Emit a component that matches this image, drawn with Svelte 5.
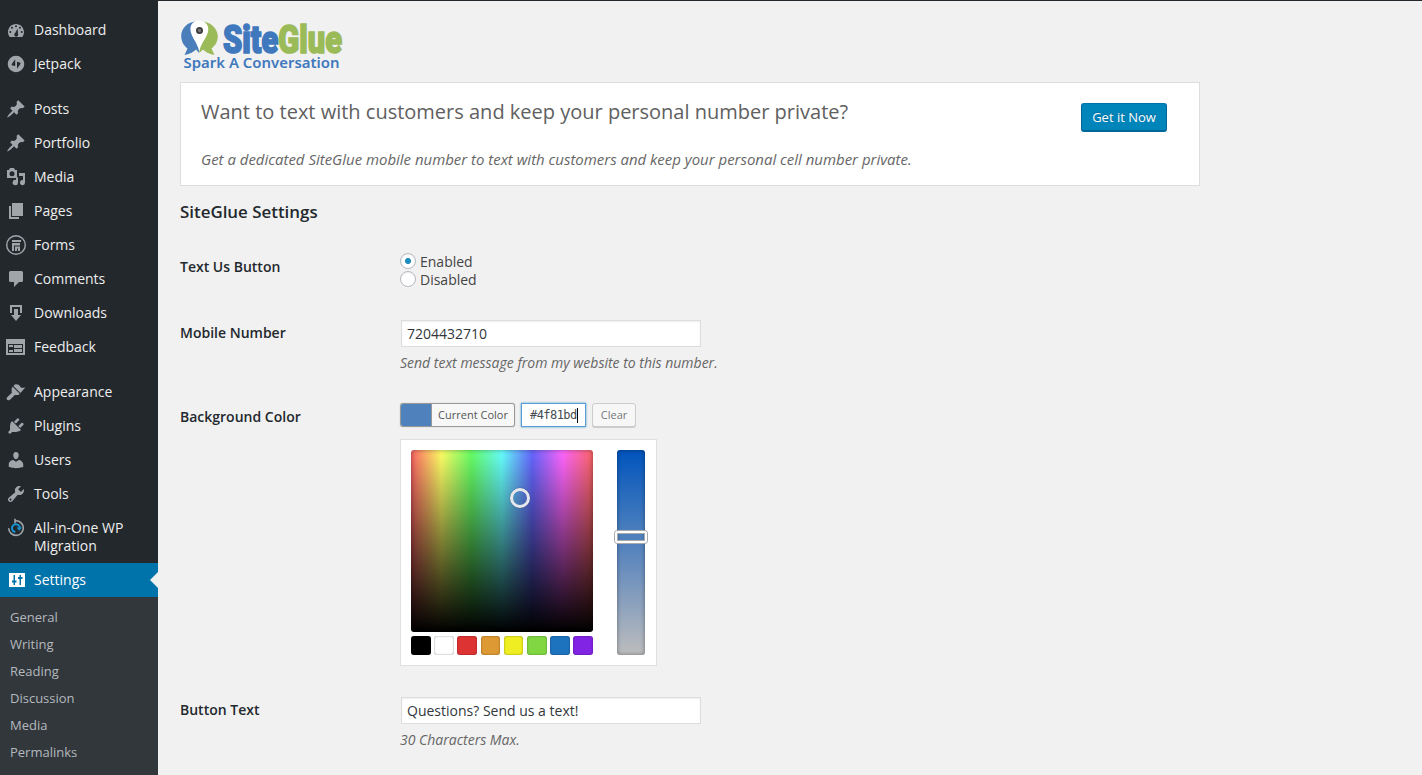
<script>
  const gauge = 'M3.800 17h12.400c1.100-1.400 1.800-3.100 1.800-5 0-4.400-3.600-8-8-8s-8 3.600-8 8c0 1.900.7 3.600 1.800 5zM10 5.300a1 1 0 1 1 0 2 1 1 0 1 1 0-2zM6 6.800a1 1 0 1 1 0 2 1 1 0 1 1 0-2zM14 6.800a1 1 0 1 1 0 2 1 1 0 1 1 0-2zM4.300 11a1 1 0 1 1 0 2 1 1 0 1 1 0-2zM15.700 11a1 1 0 1 1 0 2 1 1 0 1 1 0-2zM11.600 8.500L12 13.800a2 2 0 1 1-2.800-.9z';
  const pin = 'M10.440 3.020l1.820-1.820 6.360 6.350-1.830 1.820c-1.050-.68-2.480-.57-3.410.36l-.75.75c-.92.930-1.040 2.350-.35 3.410l-1.830 1.820-2.410-2.410-2.800 2.790c-.42.42-3.380 2.710-3.800 2.290s1.860-3.390 2.280-3.810l2.790-2.790L4.100 9.360l1.830-1.820c1.050.69 2.480.57 3.400-.36l.75-.75c.93-.92 1.050-2.350.36-3.410z';
  const groups = [
    [
      { label: 'Dashboard', d: gauge },
      { label: 'Jetpack', d: 'M10 1.700a8.300 8.300 0 1 1 0 16.600 8.300 8.300 0 1 1 0-16.600zM9.200 5.300L5.800 9.900c-.4.700.1 1.300.8 1.500L9.200 12zM11 7.800v6.900l3.400-4.600c.4-.7 0-1.300-.7-1.500z' }
    ],
    [
      { label: 'Posts', d: pin },
      { label: 'Portfolio', d: pin },
      { label: 'Media', d: 'M1 3h2l1-2h4l1 2h2v8H1zM6 4.300a2.500 2.500 0 1 0 0 5 2.500 2.500 0 1 0 0-5zM13 6h6v9.700a2.500 2.500 0 1 1-2-2.500V9h-4zM12 10v5.700a2.700 2.700 0 1 1-2-2.700v-1.500z' },
      { label: 'Pages', d: 'M6 15V2h11v13H6zm-1 1h8v2H3V5h2v11z' },
      { label: 'Forms', kind: 'forms' },
      { label: 'Comments', d: 'M4.500 2h11A1.500 1.500 0 0 1 17 3.500v8a1.500 1.500 0 0 1-1.500 1.500H13l-5 5v-5H4.500A1.500 1.500 0 0 1 3 11.500v-8A1.500 1.500 0 0 1 4.500 2z' },
      { label: 'Downloads', d: 'M14.010 4v6h2V2H4v8h2.010V4h8zm-2 2v6h3l-5 6-5-6h3V6h4z' },
      { label: 'Feedback', d: 'M0 2h19v16H0zM2 7v9h15V7zM3 8h4v2H3zM8 8h8v3H8zM3 13h4v2H3zM8 12h8v3H8z' }
    ],
    [
      { label: 'Appearance', d: 'M14.480 11.060L7.410 3.990l1.500-1.500c.5-.56 2.300-.47 3.510.32 1.210.8 1.430 1.280 2 2.090 1 1.200 2 1.100 5 .300zM6.700 4.700l7.070 7.070-1.060 1.060c-1.200.6-2.900 0-3.800.2-1 .3-4.100 4.900-6 5.200-1.800.2-2.900-1-2.100-2.400.9-1.600 4.700-4.300 5-5.400.1-.9-.6-2.500.1-4.700z' },
      { label: 'Plugins', d: 'M13.110 4.360L9.870 7.600 8 5.730l3.240-3.240c.35-.34 1.050-.2 1.560.32.520.51.660 1.210.31 1.550zm-8 1.770l.91-1.120 9.010 9.010-1.190.84c-.71.710-2.630 1.160-3.820 1.160H6.140L4.900 17.260c-.59.59-1.540.59-2.120 0a1.490 1.490 0 0 1 0-2.120l1.240-1.240v-3.880c0-1.130.4-3.190 1.090-3.890zm7.260 3.970l3.240-3.240c.34-.35 1.040-.21 1.550.31.520.51.660 1.210.31 1.550l-3.240 3.250z' },
      { label: 'Users', d: 'M10 9.250c-2.270 0-2.730-3.440-2.730-3.440C7 4.020 7.820 2 9.970 2c2.160 0 2.980 2.020 2.710 3.810 0 0-.41 3.440-2.680 3.440zm0 2.570L12.720 10c2.390 0 4.520 2.330 4.520 4.530v2.490s-3.650 1.130-7.240 1.130c-3.650 0-7.240-1.130-7.240-1.130v-2.490c0-2.250 1.940-4.480 4.470-4.480z' },
      { label: 'Tools', d: 'M16.680 9.770c-1.340 1.340-3.300 1.670-4.950.99l-5.410 6.520c-.99.99-2.590.99-3.580 0s-.99-2.590 0-3.570l6.520-5.420c-.68-1.650-.35-3.610.99-4.950 1.280-1.280 3.120-1.620 4.720-1.060l-2.890 2.890 2.820 2.820 2.860-2.870c.53 1.580.18 3.390-1.080 4.650zM3.810 16.210c.4.390 1.040.39 1.430 0 .4-.4.400-1.040 0-1.430-.39-.4-1.030-.4-1.430 0-.39.39-.39 1.030 0 1.430z' },
      { label: 'All-in-One WP Migration', kind: 'migrate' },
      { label: 'Settings', active: true, d: 'M3 3h16v14H3zM7.500 5v5.500H6v2h1.500V15H9v-2.500h1.500v-2H9V5zM13.500 5v2H12v2h1.500v6H15V9h1.500V7H15V5z' }
    ]
  ];
  const submenu = ['General', 'Writing', 'Reading', 'Discussion', 'Media', 'Permalinks'];
  const swatches = ['#000', '#fff', '#d33', '#d93', '#ee2', '#81d742', '#1e73be', '#8224e3'];
</script>

<div class="page">
  <nav class="sidebar">
    {#each groups as group}
      <ul class="group">
        {#each group as item}
          <li class="item" class:active={item.active}>
            <svg class="icon" viewBox="0 0 20 20">
              {#if item.kind === 'forms'}
                <circle cx="10" cy="10" r="9.300" fill="none" stroke="currentColor" stroke-width="1.400" />
                <path d="M6 5h9v2H6zM6 8h8v2.500H8V16H6zM9 11.500h5V16h-2v-2.500h-1V16H9z" />
              {:else if item.kind === 'migrate'}
                <path d="M9 2.800h1a7.300 7.300 0 1 1-7.300 7.500M9 5.300V.800" fill="none" stroke="currentColor" stroke-width="1.600" />
                <path d="M9.300 14a3.900 3.900 0 1 1 4.500-3.900" fill="none" stroke="#1595d3" stroke-width="2" />
                <path d="M10.500 9.500h5.500l-2.700 3.200z" fill="#1595d3" />
              {:else}
                <path fill-rule="evenodd" d={item.d} />
              {/if}
            </svg>
            <span>{item.label}</span>
          </li>
        {/each}
      </ul>
    {/each}
    <ul class="submenu">
      {#each submenu as entry}<li>{entry}</li>{/each}
    </ul>
  </nav>

  <main>
    <svg class="logo" width="166" height="58" viewBox="0 0 166 58">
      <path d="M18 2.500C8 2 1 9 1.200 17.500c.2 5.500 3 9.500 6.300 12L4.500 36c6-1 9.500-3.500 11.500-5.500l3 3.500z" fill="#4a7ebb" />
      <path d="M20 2.500c10-.5 17.800 6.500 17.800 15 0 5.500-3 9.500-6.300 12l3 6.500c-6-1-9.500-3.500-11.500-5.500L19.300 34z" fill="#9bbb59" />
      <path d="M19 1.500C13 1.500 10 6 10.500 11c.6 7 6 11 8.800 21C22 22 27.700 18 28.300 11c.4-5-3.300-9.500-9.300-9.500z" fill="#fff" />
      <circle cx="19.500" cy="11.500" r="2.600" fill="#777" stroke="#3d3d3d" stroke-width="1.800" />
      <text class="brand" x="43" y="33.500" textLength="119" lengthAdjust="spacingAndGlyphs"><tspan class="blue">Site</tspan><tspan class="green">Glue</tspan></text>
      <text class="slogan" x="3.500" y="49" textLength="156" lengthAdjust="spacingAndGlyphs">Spark A Conversation</text>
    </svg>

    <section class="promo">
      <div>
        <h2>Want to text with customers and keep your personal number private?</h2>
        <p>Get a dedicated SiteGlue mobile number to text with customers and keep your personal cell number private.</p>
      </div>
      <button class="primary">Get it Now</button>
    </section>

    <h3>SiteGlue Settings</h3>

    <div class="row toggle">
      <div class="label">Text Us Button</div>
      <div class="field">
        <div class="option"><i class="radio on"></i>Enabled</div>
        <div class="option"><i class="radio"></i>Disabled</div>
      </div>
    </div>
    <div class="row mobile">
      <div class="label">Mobile Number</div>
      <div class="field">
        <div class="input">7204432710</div>
        <p class="hint">Send text message from my website to this number.</p>
      </div>
    </div>
    <div class="row color">
      <div class="label">Background Color</div>
      <div class="field">
        <div class="controls">
          <div class="current"><i></i><span>Current Color</span></div>
          <div class="hex">#4f81bd<i class="caret"></i></div>
          <div class="clear">Clear</div>
        </div>
        <div class="picker">
          <div class="left">
            <div class="square"><i class="handle"></i></div>
            <div class="palette">
              {#each swatches as c}<i style:background={c}></i>{/each}
            </div>
          </div>
          <div class="strip"><i class="slider"></i></div>
        </div>
      </div>
    </div>
    <div class="row text">
      <div class="label">Button Text</div>
      <div class="field">
        <div class="input">Questions? Send us a text!</div>
        <p class="hint">30 Characters Max.</p>
      </div>
    </div>
  </main>
</div>

<style>
  :global(body) { margin: 0; overflow: hidden; }
  .page {
    display: flex; width: 1422px; height: 775px; overflow: hidden; box-sizing: border-box;
    border-top: 1px solid #23282d; background: #f1f1f1; color: #444;
    font: 14px/18px "Open Sans", sans-serif;
  }
  ul, p, h2, h3 { margin: 0; padding: 0; }
  li { list-style: none; }
  .sidebar { width: 158px; flex: none; height: 774px; padding-top: 12px; box-sizing: border-box; background: #23282d; overflow: hidden; }
  .group + .group { margin-top: 11px; }
  .item { position: relative; display: flex; gap: 8px; padding: 8px 20px 8px 6px; color: #eee; }
  .icon { width: 20px; height: 20px; margin: -1px 0; flex: none; color: #a0a5aa; fill: currentColor; overflow: visible; }
  .active { background: #0073aa; color: #fff; }
  .active .icon { color: #fff; }
  .active::after { content: ''; position: absolute; right: 0; top: 9px; border: 8px solid transparent; border-right-color: #f1f1f1; border-left: 0; }
  .submenu { height: 300px; padding: 7px 10px; background: #32373c; color: #b4b9be; font-size: 13px; }
  .submenu li { height: 27px; line-height: 27px; white-space: nowrap; }
  main { flex: 1; padding: 17px 0 0 22px; }
  .logo { display: block; margin-top: 1px; overflow: visible; }
  .brand { font: 900 39px Roboto, sans-serif; stroke-width: 1.7px; }
  .blue { fill: #4078bd; stroke: #4078bd; }
  .green { fill: #9bbb59; stroke: #9bbb59; }
  .slogan { font: 600 14px "Noto Sans", sans-serif; fill: #4078bd; }
  .promo { display: flex; justify-content: space-between; align-items: flex-start; box-sizing: border-box; width: 1020px; height: 104px; margin-top: 5px; padding: 15px 32px 0 20px; background: #fff; border: 1px solid #dedede; }
  h2 { color: #606060; font-size: 20px; line-height: 28px; font-weight: 400; white-space: nowrap; }
  .promo p { margin-top: 23px; font-size: 14.960px; font-style: italic; line-height: 20px; color: #666; white-space: nowrap; }
  .primary { margin-top: 5px; width: 86px; height: 29px; padding: 0; box-sizing: border-box; background: #0085ba; border: 1px solid #006799; border-top-color: #0073aa; border-bottom-width: 2px; border-radius: 3px; color: #fff; font: 13px "Open Sans", sans-serif; text-shadow: 0 -1px 1px #006799; }
  h3 { margin-top: 15px; color: #23282d; font-size: 16.900px; line-height: 22px; font-weight: 600; }
  .row { display: flex; }
  .label { width: 220px; flex: none; color: #23282d; font-weight: 600; }
  .toggle { padding-top: 30px; height: 36px; }
  .toggle .label { padding-top: 5px; }
  .option { display: flex; gap: 4px; height: 18px; }
  .radio { box-sizing: border-box; width: 16px; height: 16px; border: 1px solid #b4b9be; border-radius: 50%; background: #fff; box-shadow: inset 0 1px 2px #0001; }
  .on { background: radial-gradient(circle, #1e8cbe 0 2.700px, #fff 3.300px); }
  .mobile { margin-top: 31px; height: 53px; }
  .mobile .label, .text .label { padding-top: 4px; }
  .input { box-sizing: border-box; width: 300px; height: 27px; margin-left: 1px; padding: 4px 5px; background: #fff; border: 1px solid #ddd; box-shadow: inset 0 1px 2px #00000012; color: #32373c; line-height: 18px; }
  .hint { margin-top: 7px; color: #666; font-style: italic; }
  .color { margin-top: 30px; height: 263px; }
  .color .label { padding-top: 5px; }
  .controls { display: flex; height: 24px; font-size: 11px; }
  .current, .clear { box-sizing: border-box; display: flex; height: 24px; background: #f7f7f7; border: 1px solid #999; border-radius: 3px; line-height: 22px; color: #555; box-shadow: 0 0 1px #999; }
  .current { width: 115px; overflow: hidden; }
  .current i { width: 30px; background: #4f81bd; border-right: 1px solid #999; }
  .current span { flex: 1; text-align: center; }
  .hex { display: flex; align-items: center; box-sizing: border-box; width: 65px; height: 24px; margin-left: 6px; padding-left: 8px; background: #fff; border: 1px solid #5b9dd9; box-shadow: 0 0 2px #1e8cbecc; color: #464b50; font: 12px "DejaVu Sans Mono", monospace; letter-spacing: -.55px; }
  .caret { width: 1px; height: 15px; background: #000; }
  .clear { width: 44px; margin-left: 6px; justify-content: center; border-color: #ccc; box-shadow: 0 1px 0 #ccc; color: #777; }
  .picker { display: flex; gap: 24px; box-sizing: border-box; width: 257px; height: 227px; margin-top: 12px; padding: 10px; background: #fff; border: 1px solid #dfdfdf; }
  .left { width: 182px; }
  .square { position: relative; height: 182px; border-radius: 3px; background: linear-gradient(transparent, #000), linear-gradient(90deg, #ff6666, #ffff66 16.670%, #66ff66 33.330%, #66ffff 50%, #6666ff 66.670%, #ff66ff 83.330%, #ff6666); box-shadow: inset 0 0 5px #0006; }
  .handle { position: absolute; left: 99px; top: 38px; width: 14px; height: 14px; border: 3px solid #e5e7ec; border-radius: 50%; box-shadow: 0 0 1px #333; }
  .palette { display: flex; justify-content: space-between; margin-top: 4px; }
  .palette i { width: 19.800px; height: 19px; border-radius: 3px; box-shadow: inset 0 0 2px #0007; }
  .strip { position: relative; width: 28px; height: 205px; border-radius: 3px; background: linear-gradient(#0054bd, #4f81bd 42%, #5482bd 47%, #bdbdbd); box-shadow: inset 0 0 4px #0006; }
  .slider { position: absolute; left: -2px; top: 81px; box-sizing: border-box; width: 32px; height: 12px; border: 2px solid #fff; border-radius: 3px; box-shadow: 0 0 0 1px #aaa, inset 0 0 0 1px #aaa; }
  .text { margin-top: 31px; }
</style>
